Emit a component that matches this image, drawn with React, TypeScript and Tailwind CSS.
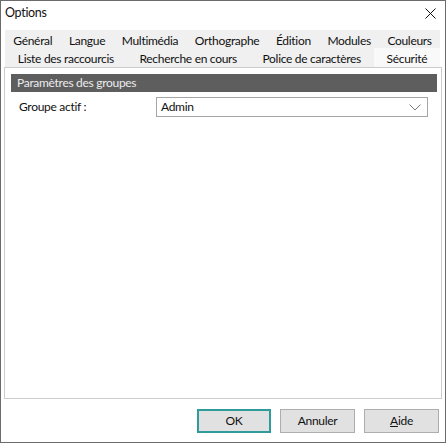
import React from "react";

const row1 = ["Général", "Langue", "Multimédia", "Orthographe", "Édition", "Modules", "Couleurs"];
const row2 = ["Liste des raccourcis", "Recherche en cours", "Police de caractères", "Sécurité"];

const App = () => {
  return (
    <div className="w-[447px] h-[444px] bg-white" style={{ fontFamily: 'Lato, "Noto Sans", sans-serif' }}>
      <div className="w-[446px] h-[443px] border border-[#6b6b6b] bg-white flex flex-col text-[12px] tracking-[-0.3px] text-[#111]">
        {/* title bar */}
        <div className="h-[29px] flex items-center justify-between pl-[4px] pr-[9px] shrink-0">
          <span className="text-[12.5px] leading-none -mt-[4px]">Options</span>
          <svg width="11" height="11" viewBox="0 0 11 11" className="-mt-[4px]">
            <path d="M0.5 0.5 L10.5 10.5 M10.5 0.5 L0.5 10.5" stroke="#111" strokeWidth="1" />
          </svg>
        </div>

        {/* tabs */}
        <div className="ml-[4px] w-[435px] bg-[#f0f0f0] shrink-0">
          <div className="flex h-[18px] items-center pt-[3px]">
            {row1.map((t) => (
              <div key={t} className="grow text-center leading-none whitespace-nowrap">
                {t}
              </div>
            ))}
          </div>
          <div className="flex h-[19px]">
            {row2.map((t) => (
              <div
                key={t}
                className={
                  "grow flex items-center justify-center pt-[2px] leading-none whitespace-nowrap " +
                  (t === "Sécurité" ? "bg-[#f9f9f9]" : "")
                }
              >
                {t}
              </div>
            ))}
          </div>
        </div>

        {/* panel */}
        <div className="ml-[3px] w-[438px] h-[332px] border border-[#cccccc] bg-white shrink-0 pt-[6px] pl-[6px] pr-[4px]">
          <div className="h-[18px] bg-[#5e5e5e] text-[#ececec] flex items-center pl-[6px] leading-none">
            Paramètres des groupes
          </div>
          <div className="flex items-center mt-[5px] h-[20px]">
            <div className="w-[145px] pl-[8px] leading-none">Groupe actif :</div>
            <div className="w-[272px] h-[20px] border border-[#a5a5a5] flex items-center justify-between pl-[4px] pr-[6px]">
              <span className="leading-none">Admin</span>
              <svg width="12" height="7" viewBox="0 0 12 7">
                <path d="M0.5 0.5 L6 6 L11.5 0.5" stroke="#7a7a7a" strokeWidth="1" fill="none" />
              </svg>
            </div>
          </div>
        </div>

        {/* buttons */}
        <div className="flex justify-end gap-[9px] pr-[6px] pt-[10px]">
          <button className="w-[74px] h-[24px] bg-[#e1e1e1] border-2 border-[#2f9b9b] flex items-center justify-center leading-none">
            OK
          </button>
          <button className="w-[75px] h-[24px] bg-[#e1e1e1] border border-[#adadad] flex items-center justify-center leading-none">
            Annuler
          </button>
          <button className="w-[75px] h-[24px] bg-[#e1e1e1] border border-[#adadad] flex items-center justify-center leading-none">
            <span>
              <span className="underline">A</span>ide
            </span>
          </button>
        </div>
      </div>
    </div>
  );
};

export default App;
